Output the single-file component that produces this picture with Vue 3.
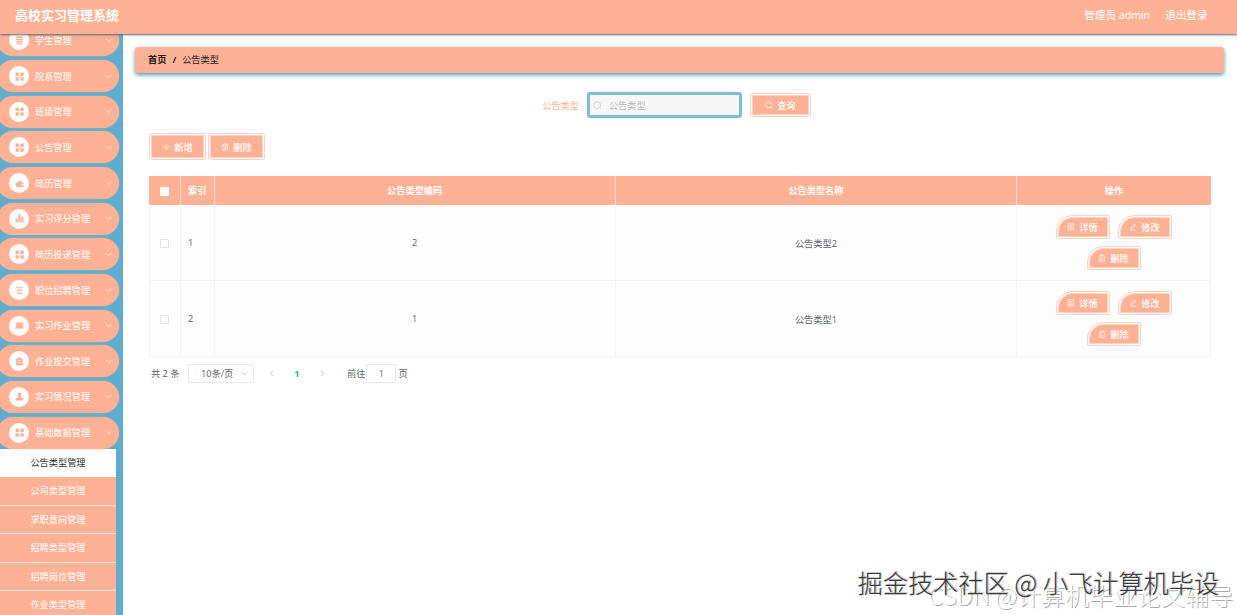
<script setup>
import { ref } from 'vue'

const menus = [
  { title: '学生管理', icon: 'list' },
  { title: '院系管理', icon: 'grid' },
  { title: '班级管理', icon: 'grid' },
  { title: '公告管理', icon: 'grid' },
  { title: '简历管理', icon: 'wallet' },
  { title: '实习评分管理', icon: 'chart' },
  { title: '简历投递管理', icon: 'grid' },
  { title: '职位招聘管理', icon: 'coin' },
  { title: '实习作业管理', icon: 'ticket' },
  { title: '作业提交管理', icon: 'clipboard' },
  { title: '实习情况管理', icon: 'user' },
  { title: '基础数据管理', icon: 'grid' },
]

const icons = {
  list: 'M2 1h12v2.500H2zM2 5h12v2.500H2zM2 9h12v2.500H2zM3 13h10v2H3z',
  grid: 'M1 1h6v6H1zM9.500 1h6v6h-6zM1 9.500h6v6H1zM9.500 9.500h6v6h-6z',
  wallet: 'M1 8l8-6 3 4h3v3h-4v2h4v3H3l-2-2z',
  chart: 'M1 8h3.500v7H1zM6 1h4v14H6zM11.500 5H15v10h-3.500z',
  coin: 'M2 2h12v1.500H2zM4 5h8v1H4zM3 7h10v1.500H3zM2 10h5v1H2zM9 10h5v1H9zM4 12h8v2H4z',
  ticket: 'M1 2.500h14v3.500l-2 2 2 2v3.500H1V10l2-2-2-2z',
  clipboard: 'M5 1h6v2h3v12H2V3h3zM5 6v1h6V6zM5 9v1h6V9z',
  user: 'M8 1a3.800 3.800 0 0 1 2 7v1l5 2v4H1v-4l5-2V8a3.800 3.800 0 0 1 2-7z',
}

const subMenus = ['公告类型管理', '公司类型管理', '求职意向管理', '招聘类型管理', '招聘岗位管理', '作业类型管理']
const activeSub = ref('公告类型管理')

const keyword = ref('')
const rows = [
  { index: 1, code: '2', name: '公告类型2' },
  { index: 2, code: '1', name: '公告类型1' },
]

const actions = [
  { label: '详情', path: 'M2.500 1.500h11v13h-11zM5 5h6M5 8h6M5 11h6' },
  { label: '修改', path: 'M3 10l7-8.500 3 2.500-7 8.500-3 .5zM2 14.500h12' },
  { label: '删除', path: 'M1.500 4h13M5.500 4V1.500h5V4M3 4v10.500h10V4M6.500 7v5M9.500 7v5' },
]
</script>

<template>
  <div class="page">
    <header class="header">
      <h1 class="header__title">高校实习管理系统</h1>
      <div class="header__user">
        <span>管理员 admin</span>
        <span>退出登录</span>
      </div>
    </header>

    <div class="body">
      <aside class="sidebar">
        <ul class="menu">
          <li v-for="menu in menus" :key="menu.title" class="menu__item">
            <span class="menu__icon">
              <svg viewBox="0 0 16 16"><path :d="icons[menu.icon]" fill-rule="evenodd" /></svg>
            </span>
            <span class="menu__title">{{ menu.title }}</span>
            <svg class="menu__arrow" viewBox="0 0 8 8"><path d="M1 2.500l3 3 3-3" /></svg>
          </li>
        </ul>
        <ul class="submenu">
          <li
            v-for="item in subMenus"
            :key="item"
            class="submenu__item"
            :class="{ 'is-active': item === activeSub }"
            @click="activeSub = item"
          >
            {{ item }}
          </li>
        </ul>
      </aside>

      <main class="main">
        <nav class="breadcrumb">
          <b>首页</b>
          <b class="breadcrumb__sep">/</b>
          <span>公告类型</span>
        </nav>

        <form class="search" @submit.prevent>
          <label class="search__label" for="keyword">公告类型</label>
          <div class="search__box">
            <svg class="icon" viewBox="0 0 16 16"><circle cx="7.500" cy="7.500" r="6" /><path d="M12 12l2.500 2.500" /></svg>
            <input id="keyword" v-model="keyword" placeholder="公告类型" />
          </div>
          <button class="btn btn--search">
            <svg class="icon" viewBox="0 0 16 16"><circle cx="7.500" cy="7.500" r="6" /><path d="M12 12l2.500 2.500" /></svg>
            查询
          </button>
        </form>

        <div class="toolbar">
          <button class="btn">
            <svg class="icon" viewBox="0 0 16 16"><path d="M8 1.500v13M1.500 8h13" /></svg>
            新增
          </button>
          <button class="btn">
            <svg class="icon" viewBox="0 0 16 16"><path :d="actions[2].path" /></svg>
            删除
          </button>
        </div>

        <table class="table">
          <colgroup>
            <col class="col-check" />
            <col class="col-index" />
            <col class="col-text" />
            <col class="col-text" />
            <col />
          </colgroup>
          <thead>
            <tr>
              <th><span class="checkbox checkbox--head"></span></th>
              <th class="cell-left">索引</th>
              <th>公告类型编码</th>
              <th>公告类型名称</th>
              <th>操作</th>
            </tr>
          </thead>
          <tbody>
            <tr v-for="row in rows" :key="row.index">
              <td><span class="checkbox"></span></td>
              <td class="cell-left">{{ row.index }}</td>
              <td>{{ row.code }}</td>
              <td>{{ row.name }}</td>
              <td>
                <div class="actions">
                  <button v-for="action in actions" :key="action.label" class="btn btn--row">
                    <svg class="icon" viewBox="0 0 16 16"><path :d="action.path" /></svg>
                    {{ action.label }}
                  </button>
                </div>
              </td>
            </tr>
          </tbody>
        </table>

        <div class="pagination">
          <span class="pagination__total">共 2 条</span>
          <span class="pagination__size">
            10条/页
            <svg viewBox="0 0 8 8"><path d="M1 2.500l3 3 3-3" /></svg>
          </span>
          <svg class="pagination__arrow" viewBox="0 0 8 8"><path d="M5.500 1l-3 3 3 3" /></svg>
          <span class="pagination__current">1</span>
          <svg class="pagination__arrow" viewBox="0 0 8 8"><path d="M2.500 1l3 3-3 3" /></svg>
          <span class="pagination__goto">前往</span>
          <span class="pagination__input">1</span>
          <span>页</span>
        </div>
      </main>
    </div>

    <div class="mark mark--back">CSDN @计算机毕业论文辅导</div>
    <div class="mark mark--front">掘金技术社区 @ 小飞计算机毕设</div>
  </div>
</template>

<style>
body {
  margin: 0;
  overflow: hidden;
}
</style>

<style scoped>
.page {
  position: relative;
  display: flex;
  flex-direction: column;
  height: 100vh;
  overflow: hidden;
  background: #fff;
  color: #606266;
  font-family: 'Open Sans', 'Noto Sans CJK SC', sans-serif;
  font-size: 9.2px;
}

.page * {
  box-sizing: border-box;
}

svg {
  flex: none;
  fill: none;
  stroke: currentColor;
}

.header {
  position: relative;
  z-index: 2;
  flex: none;
  display: flex;
  align-items: center;
  justify-content: space-between;
  height: 34px;
  padding: 0 29.500px 5px 15px;
  background: #ffb195;
  box-shadow: 0 1px 2px #4f6870;
  color: #fff;
}

.header__title {
  margin: 0;
  font-size: 13px;
  line-height: 20px;
  font-weight: 700;
}

.header__user {
  display: flex;
  gap: 15px;
  margin-top: -1px;
  font-size: 10.6px;
}

.body {
  flex: 1;
  display: flex;
  min-height: 0;
}

.sidebar {
  flex: none;
  width: 122.500px;
  overflow: hidden;
  background: #5eadcf;
}

.menu,
.submenu {
  margin: 0;
  padding: 0;
  list-style: none;
}

.menu {
  display: flex;
  flex-direction: column;
  gap: 3.660px;
  margin: -9.600px 0 0 -3px;
}

.menu__item {
  display: flex;
  align-items: center;
  width: 122px;
  height: 32px;
  padding: 0 7px 0 12px;
  border-radius: 16px;
  background: #ffb195;
  box-shadow: 0 0 2px rgba(255, 177, 149, 0.6);
  color: #fff;
}

.menu__icon {
  display: flex;
  align-items: center;
  justify-content: center;
  width: 20px;
  height: 20px;
  margin-right: 6px;
  border-radius: 50%;
  background: #fff;
  color: #ffb195;
}

.menu__icon svg {
  width: 9px;
  height: 9px;
  fill: currentColor;
  stroke: none;
}

.menu__title {
  flex: 1;
  margin-top: -1px;
}

.menu__arrow {
  width: 7px;
  height: 7px;
  opacity: 0.8;
}

.submenu {
  width: 116px;
}

.submenu__item {
  height: 28.500px;
  border-bottom: 1px solid #ffe4d9;
  background: #ffb195;
  color: #fff;
  line-height: 28.500px;
  text-align: center;
}

.submenu__item.is-active {
  border-bottom-color: #fff;
  background: #fff;
  color: #333;
}

.main {
  flex: 1;
  min-width: 0;
  padding: 13px 13px 0 12.500px;
}

.breadcrumb {
  display: flex;
  align-items: center;
  height: 26px;
  padding: 0 13px 2px;
  border-radius: 3px;
  background: #ffb195;
  box-shadow: 0 2px 4px #4a9dba;
  color: #222;
}

.breadcrumb__sep {
  margin: 0 6px;
}

.search {
  display: flex;
  align-items: center;
  justify-content: center;
  height: 26px;
  margin: 19px 6px 0 0;
}

.search__label {
  margin-right: 8px;
  color: #ffb195;
}

.search__box {
  display: flex;
  align-items: center;
  width: 155px;
  height: 26px;
  padding: 0 3px;
  border: 3px solid #7dbdd8;
  border-radius: 3px;
  background: #f7f7f7;
  color: #c0c4cc;
}

.search__box input {
  width: 110px;
  margin-left: 7px;
  padding: 0;
  border: 0;
  outline: 0;
  background: transparent;
  font: inherit;
}

.search__box input::placeholder {
  color: #b8b9bc;
}

.icon {
  width: 9px;
  height: 9px;
  stroke-width: 1.300;
}

.btn {
  display: flex;
  align-items: center;
  justify-content: center;
  gap: 4px;
  width: 57px;
  height: 27px;
  padding: 0;
  border: 3px double #ffd1c0;
  border-radius: 2px;
  background: #ffb195;
  background-clip: padding-box;
  color: #fff;
  font: inherit;
  font-weight: 500;
}

.btn .icon {
  width: 8px;
  height: 8px;
}

.btn--search {
  width: 61px;
  height: 24px;
  margin-left: 8px;
}

.toolbar {
  display: flex;
  gap: 2px;
  margin: 15px 0 0 14px;
}

.table {
  width: 1062px;
  margin: 16px 0 0 14px;
  border-collapse: separate;
  border-spacing: 0;
  table-layout: fixed;
  text-align: center;
}

.col-check {
  width: 32px;
}

.col-index {
  width: 33.500px;
}

.col-text {
  width: 401.300px;
}

.table th {
  height: 29px;
  padding: 0 0 1px;
  border-right: 1px solid #ffe4d9;
  background: #ffb195;
  color: #fff;
  font-weight: 700;
}

.table th:last-child {
  border-right: 0;
}

.table td {
  height: 76px;
  padding: 0;
  border-right: 1px solid #f1f5f5;
  border-bottom: 1px solid #f1f5f5;
  background: #fdfdfd;
}

.table td:first-child {
  border-left: 1px solid #f1f5f5;
}

.table .cell-left {
  padding-left: 7px;
  text-align: left;
}

.checkbox {
  display: inline-block;
  width: 9px;
  height: 9px;
  margin-right: 2px;
  border: 1px solid #e0e3e8;
  border-radius: 1px;
  background: #fff;
  vertical-align: middle;
}

.checkbox--head {
  margin-right: 0;
  border-color: #fff;
}

.actions {
  display: flex;
  flex-wrap: wrap;
  justify-content: center;
  gap: 7px 8px;
  padding: 0 35px;
}

.btn--row {
  width: 54px;
  height: 24px;
  border-radius: 16px 2px 2px 2px;
}

.pagination {
  display: flex;
  align-items: center;
  height: 20px;
  margin: 6px 0 0 16px;
}

.pagination__total {
  width: 37px;
}

.pagination__size {
  display: flex;
  align-items: center;
  justify-content: space-between;
  width: 66px;
  height: 19px;
  margin-right: 14px;
  padding: 0 5px 0 12px;
  border: 1px solid #e6e8ed;
  border-radius: 2px;
}

.pagination__size svg,
.pagination__arrow {
  width: 7px;
  height: 7px;
  color: #b5b8bd;
}

.pagination__current {
  width: 44px;
  color: #18b884;
  font-weight: 700;
  text-align: center;
}

.pagination__goto {
  margin-left: 21px;
}

.pagination__input {
  width: 30px;
  height: 19px;
  margin: 0 2px 0 1px;
  border: 1px solid #e6e8ed;
  border-radius: 2px;
  line-height: 17px;
  text-align: center;
}

.mark {
  position: absolute;
  z-index: 3;
  white-space: nowrap;
  pointer-events: none;
  font-family: 'Noto Sans CJK SC', sans-serif;
}

.mark--back {
  right: 4px;
  bottom: 3px;
  color: #fff;
  font-size: 24px;
  font-weight: 300;
  line-height: 34px;
  text-shadow: 1px 1px 0 #aaa;
}

.mark--front {
  right: 18px;
  bottom: 15px;
  color: #3a3a3a;
  font-size: 25.200px;
  font-weight: 300;
  line-height: 36px;
  text-shadow: 1px -1px 0 #ccc, 1px 0 0 #bbb;
}
</style>
